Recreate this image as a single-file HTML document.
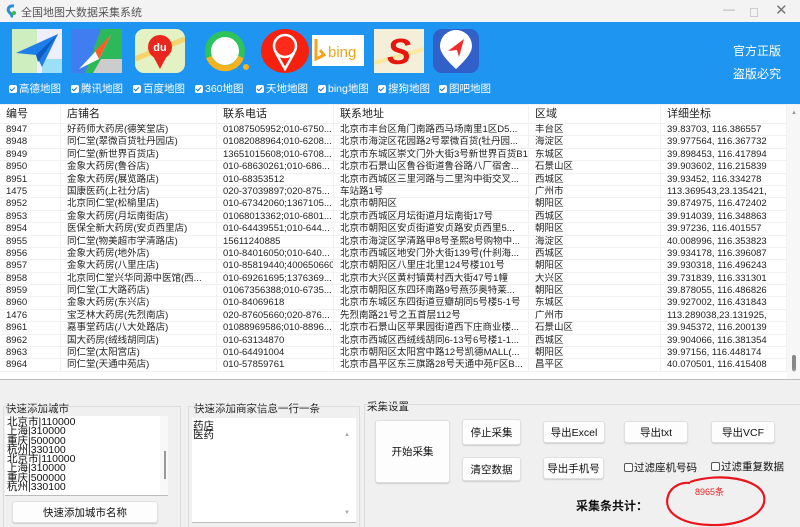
<!DOCTYPE html>
<html><head><meta charset="utf-8"><style>
*{margin:0;padding:0;box-sizing:border-box}
body{width:800px;height:527px;overflow:hidden;background:#f0f0f0;font-family:"Liberation Sans","Noto Sans CJK SC",sans-serif;font-size:11px;color:#111;position:relative}
.a{position:absolute}
#title{left:0;top:0;width:800px;height:22px;background:#f3f3f3;font-size:11px;color:#555}
#blue{left:0;top:22px;width:800px;height:82px;background:#1f95f2}
.ic{position:absolute;top:7px}
.cb{position:absolute;top:59px;color:#fff;font-size:10.5px;white-space:nowrap}
.cb i{display:inline-block;width:8px;height:8px;background:#fff;border-radius:2px;margin-right:2px;vertical-align:-1px;position:relative}
.cb i:after{content:"";position:absolute;left:2px;top:1px;width:2px;height:4px;border:solid #1f6fd0;border-width:0 1.3px 1.3px 0;transform:rotate(45deg)}
#grid{left:0;top:105px;width:800px;height:275px;background:#fff;border-bottom:1px solid #bbb;overflow:hidden}
.r{display:flex;height:12.4px;overflow:hidden;border-bottom:1px solid #f1f1f1;width:787px}
.r span{display:block;height:12px;font-size:9.5px;white-space:nowrap;overflow:hidden;padding-left:6px;border-right:1px solid #f1f1f1;line-height:12px;color:#222}
.r.h{height:19px}
.r.h span{height:19px;line-height:18px;font-size:11px}
.r span:nth-child(1){width:61px}.r span:nth-child(2){width:156px}.r span:nth-child(3){width:117px}.r span:nth-child(4){width:195px}.r span:nth-child(5){width:132px}.r span:nth-child(6){width:126px}
.grp{position:absolute;font-size:10.5px;color:#222}
.box{position:absolute;background:#fff;border:1px solid #ddd}
.btn{position:absolute;background:#fdfdfd;border:1px solid #e0e0e0;border-radius:3px;font-size:10.5px;display:flex;align-items:center;justify-content:center;box-shadow:0 1px 1px #ccc}
.ta{font-size:10.5px;line-height:9.3px;color:#111}
</style></head><body>
<div id="title" class="a">
<svg class="a" style="left:5px;top:4px" width="12" height="14"><path d="M9 2C4 1 2 5 4 8 6 10 8 11 6 13" stroke="#2a8fd9" stroke-width="3" fill="none"/><circle cx="9" cy="9" r="2" fill="#3cb84a"/></svg>
<span class="a" style="left:21px;top:4px">全国地图大数据采集系统</span>
<span class="a" style="left:723px;top:2px;color:#aaa;font-size:12px">—</span>
<span class="a" style="left:750px;width:8px;height:9px;border:1px solid #ccc;top:8px"></span>
<span class="a" style="left:775px;top:1px;color:#777;font-size:15px">✕</span>
</div>
<div id="blue" class="a">
<svg class="ic" style="left:12px" width="50" height="44"><rect width="50" height="44" fill="#cfeec0"/><rect x="25" width="25" height="44" fill="#eef"/><rect x="30" y="30" width="20" height="14" fill="#9de0f5"/><path d="M4 24 L46 5 L30 38 L24 26 Z" fill="#1f7fe8"/><path d="M24 26 L46 5 L26 33Z" fill="#0d5cc4"/></svg>
<svg class="ic" style="left:71px" width="51" height="44"><rect width="51" height="44" fill="#3f7ef0"/><path d="M30 0h21v44H14Z" fill="#2db85a"/><path d="M30 30 L51 30 51 44 22 44Z" fill="#ccc"/><path d="M8 40 L40 6 28 30Z" fill="#fff"/><path d="M40 6 L28 30 24 22Z" fill="#ff5b2b"/></svg>
<svg class="ic" style="left:135px" width="50" height="44"><rect width="50" height="44" rx="9" fill="#e4f1c3"/><path d="M0 30 L50 10" stroke="#f5d46b" stroke-width="5"/><circle cx="25" cy="18" r="12" fill="#e8281e"/><path d="M17 25 L25 40 33 25Z" fill="#e8281e"/><text x="25" y="22" fill="#fff" font-size="11" font-weight="bold" text-anchor="middle" font-family="Liberation Sans">du</text></svg>
<svg class="ic" style="left:203px" width="48" height="44"><circle cx="22" cy="22" r="17" fill="#fff" stroke="#2bc35a" stroke-width="6"/><path d="M6 28 A17 17 0 0 0 38 28" stroke="#f6b31f" stroke-width="6" fill="none"/><circle cx="43" cy="38" r="3" fill="#f6b31f"/></svg>
<svg class="ic" style="left:260px" width="50" height="44"><ellipse cx="25" cy="22" rx="24" ry="22" fill="#f5200e"/><circle cx="25" cy="17" r="11" fill="#ff2a1a" stroke="#fff" stroke-width="2.5"/><path d="M16 24 L25 40 34 24" stroke="#fff" stroke-width="2.5" fill="none"/></svg>
<svg class="ic" style="left:312px;top:13px" width="52" height="31"><rect width="52" height="31" fill="#fff"/><path d="M4 4v20l8-4-4-5" stroke="#f5a31a" stroke-width="3" fill="none"/><text x="16" y="22" fill="#f5a31a" font-size="15" font-family="Liberation Sans">bing</text></svg>
<svg class="ic" style="left:374px" width="50" height="44"><rect width="50" height="44" fill="#f3efd8"/><path d="M0 34 L50 20" stroke="#fae7a0" stroke-width="4"/><text x="25" y="35" fill="#e8140e" font-size="36" font-weight="bold" font-style="italic" text-anchor="middle" font-family="Liberation Sans">S</text></svg>
<svg class="ic" style="left:433px" width="46" height="44"><rect width="46" height="44" rx="9" fill="#3160c8"/><path d="M23 40 C10 28 7 22 7 17 A16 16 0 0 1 39 17 C39 22 36 28 23 40Z" fill="#fff"/><path d="M15 22 L31 10 26 28 24 21Z" fill="#ef2b2b"/></svg>
<span class="cb" style="left:9px"><i></i>高德地图</span>
<span class="cb" style="left:71px"><i></i>腾讯地图</span>
<span class="cb" style="left:133px"><i></i>百度地图</span>
<span class="cb" style="left:195px"><i></i>360地图</span>
<span class="cb" style="left:256px"><i></i>天地地图</span>
<span class="cb" style="left:318px"><i></i>bing地图</span>
<span class="cb" style="left:378px"><i></i>搜狗地图</span>
<span class="cb" style="left:439px"><i></i>图吧地图</span>
<span class="a" style="left:733px;top:20px;color:#fff;font-size:12px">官方正版</span>
<span class="a" style="left:733px;top:43px;color:#fff;font-size:12px">盗版必究</span>
</div>
<div id="grid" class="a">
<div class="r h"><span>编号</span><span>店铺名</span><span>联系电话</span><span>联系地址</span><span>区域</span><span>详细坐标</span></div>
<div class="r"><span>8947</span><span>好药师大药房(德笑堂店)</span><span>01087505952;010-6750...</span><span>北京市丰台区角门南路西马场南里1区D5...</span><span>丰台区</span><span>39.83703, 116.386557</span></div>
<div class="r"><span>8948</span><span>同仁堂(翠微百货牡丹园店)</span><span>01082088964;010-6208...</span><span>北京市海淀区花园路2号翠微百货(牡丹园...</span><span>海淀区</span><span>39.977564, 116.367732</span></div>
<div class="r"><span>8949</span><span>同仁堂(新世界百货店)</span><span>13651015608;010-6708...</span><span>北京市东城区崇文门外大街3号新世界百货B1</span><span>东城区</span><span>39.898453, 116.417894</span></div>
<div class="r"><span>8950</span><span>金象大药房(鲁谷店)</span><span>010-68630261;010-686...</span><span>北京市石景山区鲁谷街道鲁谷路八厂宿舍...</span><span>石景山区</span><span>39.903602, 116.215839</span></div>
<div class="r"><span>8951</span><span>金象大药房(展览路店)</span><span>010-68353512</span><span>北京市西城区三里河路与二里沟中街交叉...</span><span>西城区</span><span>39.93452, 116.334278</span></div>
<div class="r"><span>1475</span><span>国康医药(上社分店)</span><span>020-37039897;020-875...</span><span>车站路1号</span><span>广州市</span><span>113.369543,23.135421,</span></div>
<div class="r"><span>8952</span><span>北京同仁堂(松榆里店)</span><span>010-67342060;1367105...</span><span>北京市朝阳区</span><span>朝阳区</span><span>39.874975, 116.472402</span></div>
<div class="r"><span>8953</span><span>金象大药房(月坛南街店)</span><span>01068013362;010-6801...</span><span>北京市西城区月坛街道月坛南街17号</span><span>西城区</span><span>39.914039, 116.348863</span></div>
<div class="r"><span>8954</span><span>医保全新大药房(安贞西里店)</span><span>010-64439551;010-644...</span><span>北京市朝阳区安贞街道安贞路安贞西里5...</span><span>朝阳区</span><span>39.97236, 116.401557</span></div>
<div class="r"><span>8955</span><span>同仁堂(物美超市学清路店)</span><span>15611240885</span><span>北京市海淀区学清路甲8号圣熙8号购物中...</span><span>海淀区</span><span>40.008996, 116.353823</span></div>
<div class="r"><span>8956</span><span>金象大药房(地外店)</span><span>010-84016050;010-640...</span><span>北京市西城区地安门外大街139号(什刹海...</span><span>西城区</span><span>39.934178, 116.396087</span></div>
<div class="r"><span>8957</span><span>金象大药房(八里庄店)</span><span>010-85819440;4006506600</span><span>北京市朝阳区八里庄北里124号楼101号</span><span>朝阳区</span><span>39.930318, 116.496243</span></div>
<div class="r"><span>8958</span><span>北京同仁堂兴华同源中医馆(西...</span><span>010-69261695;1376369...</span><span>北京市大兴区黄村镇黄村西大街47号1幢</span><span>大兴区</span><span>39.731839, 116.331301</span></div>
<div class="r"><span>8959</span><span>同仁堂(工大路药店)</span><span>01067356388;010-6735...</span><span>北京市朝阳区东四环南路9号燕莎奥特莱...</span><span>朝阳区</span><span>39.878055, 116.486826</span></div>
<div class="r"><span>8960</span><span>金象大药房(东兴店)</span><span>010-84069618</span><span>北京市东城区东四街道豆瓣胡同5号楼5-1号</span><span>东城区</span><span>39.927002, 116.431843</span></div>
<div class="r"><span>1476</span><span>宝芝林大药房(先烈南店)</span><span>020-87605660;020-876...</span><span>先烈南路21号之五首层112号</span><span>广州市</span><span>113.289038,23.131925,</span></div>
<div class="r"><span>8961</span><span>嘉事堂药店(八大处路店)</span><span>01088969586;010-8896...</span><span>北京市石景山区苹果园街道西下庄商业楼...</span><span>石景山区</span><span>39.945372, 116.200139</span></div>
<div class="r"><span>8962</span><span>国大药房(绒线胡同店)</span><span>010-63134870</span><span>北京市西城区西绒线胡同6-13号6号楼1-1...</span><span>西城区</span><span>39.904066, 116.381354</span></div>
<div class="r"><span>8963</span><span>同仁堂(太阳宫店)</span><span>010-64491004</span><span>北京市朝阳区太阳宫中路12号凯德MALL(...</span><span>朝阳区</span><span>39.97156, 116.448174</span></div>
<div class="r"><span>8964</span><span>同仁堂(天通中苑店)</span><span>010-57859761</span><span>北京市昌平区东三旗路28号天通中苑F区B...</span><span>昌平区</span><span>40.070501, 116.415408</span></div>
<div class="a" style="left:787px;top:0;width:13px;height:275px;background:#f7f7f7"></div>
<span class="a" style="left:791px;top:5px;font-size:6px;color:#999">▲</span>
<div class="a" style="left:792px;top:250px;width:4px;height:16px;background:#888;border-radius:2px"></div>
<span class="a" style="left:791px;top:263px;font-size:6px;color:#999">▼</span>
</div>
<span class="grp" style="left:6px;top:401px">快速添加城市</span>
<div class="a" style="left:3px;top:406px;width:178px;height:121px;border:1px solid #ddd;border-bottom:none"></div>
<div class="box" style="left:5px;top:416px;width:163px;height:80px;border:none;border-bottom:1px solid #bbb">
<div class="ta" style="padding:2px 0 0 2px">北京市|110000<br>上海|310000<br>重庆|500000<br>杭州|330100<br>北京市|110000<br>上海|310000<br>重庆|500000<br>杭州|330100</div>
<div class="a" style="left:155px;top:0;width:8px;height:79px;background:#f8f8f8"></div>
<div class="a" style="left:159px;top:35px;width:2px;height:28px;background:#999"></div>
</div>
<div class="btn" style="left:12px;top:501px;width:146px;height:22px">快速添加城市名称</div>
<span class="grp" style="left:194px;top:401px">快速添加商家信息一行一条</span>
<div class="a" style="left:188px;top:406px;width:172px;height:121px;border:1px solid #ddd;border-bottom:none"></div>
<div class="box" style="left:192px;top:418px;width:164px;height:105px;border:none;border-bottom:1px solid #bbb">
<div class="ta" style="padding:4px 0 0 1px">药店<br>医药</div>
<span class="a" style="left:152px;top:14px;font-size:6px;color:#aaa">▲</span>
<span class="a" style="left:152px;top:92px;font-size:6px;color:#aaa">▼</span>
</div>
<span class="grp" style="left:367px;top:399px">采集设置</span>
<div class="a" style="left:364px;top:404px;width:436px;height:123px;border-top:1px solid #ddd;border-left:1px solid #ddd"></div>
<div class="btn" style="left:375px;top:420px;width:75px;height:63px">开始采集</div>
<div class="btn" style="left:462px;top:419px;width:59px;height:26px">停止采集</div>
<div class="btn" style="left:462px;top:457px;width:59px;height:24px">清空数据</div>
<div class="btn" style="left:543px;top:421px;width:62px;height:22px">导出Excel</div>
<div class="btn" style="left:543px;top:457px;width:61px;height:22px">导出手机号</div>
<div class="btn" style="left:624px;top:421px;width:64px;height:22px">导出txt</div>
<div class="btn" style="left:711px;top:421px;width:64px;height:22px">导出VCF</div>
<span class="a" style="left:624px;top:460px;font-size:10.5px"><i style="display:inline-block;width:9px;height:9px;border:1px solid #555;border-radius:2px;background:#fff;vertical-align:-1px;margin-right:1px"></i>过滤座机号码</span>
<span class="a" style="left:711px;top:459px;font-size:10.5px"><i style="display:inline-block;width:9px;height:9px;border:1px solid #555;border-radius:2px;background:#fff;vertical-align:-1px;margin-right:1px"></i>过滤重复数据</span>
<span class="a" style="left:576px;top:497px;font-size:12px;font-weight:bold">采集条共计：</span>
<span class="a" style="left:695px;top:485px;font-size:9px;color:#e22">8965条</span>
<svg class="a" style="left:660px;top:474px" width="110" height="53"><path d="M30 8 C60 -2 100 5 104 22 C108 40 80 52 50 51 C20 50 3 38 8 22 C11 12 22 8 30 9" stroke="#e8161c" stroke-width="2.2" fill="none"/></svg>
</body></html>
